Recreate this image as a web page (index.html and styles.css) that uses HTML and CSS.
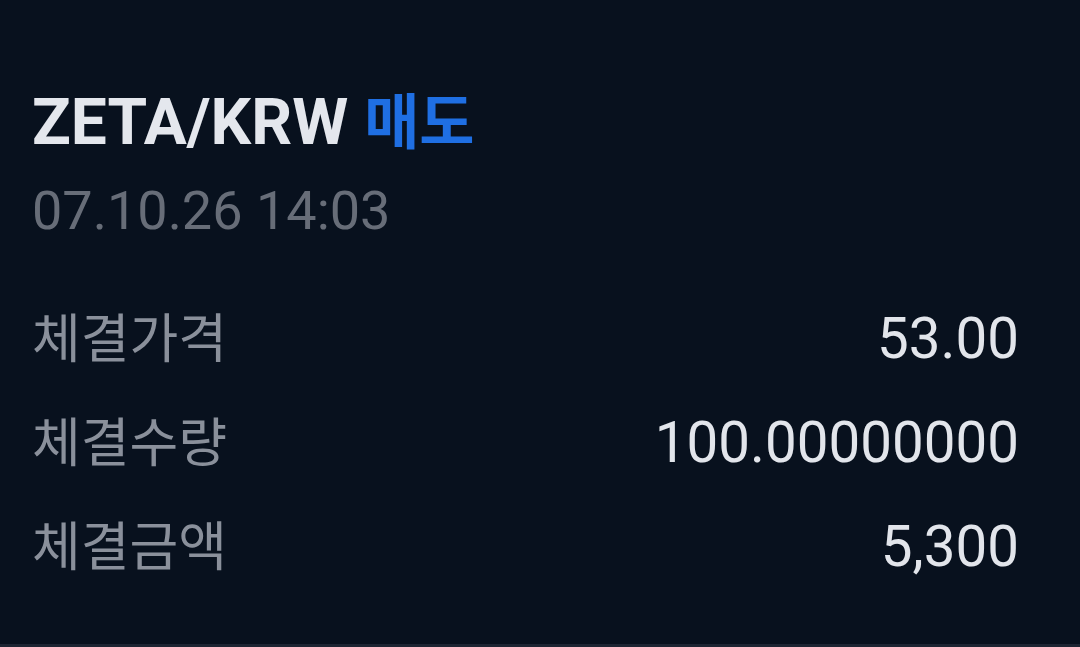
FILE: index.html
```html
<!DOCTYPE html>
<html lang="ko">
<head>
<meta charset="utf-8">
<title>체결 내역</title>
<link rel="stylesheet" href="styles.css">
</head>
<body>
<main class="sheet">
  <header class="head">
    <h1 class="pair">ZETA/KRW <span class="side">매도</span></h1>
    <div class="time">07.10.26 14:03</div>
  </header>
  <dl class="rows">
    <div class="row"><dt>체결가격</dt><dd>53.00</dd></div>
    <div class="row"><dt>체결수량</dt><dd>100.00000000</dd></div>
    <div class="row"><dt>체결금액</dt><dd>5,300</dd></div>
  </dl>
</main>
<div class="bottom-edge"></div>
</body>
</html>
```

FILE: styles.css
```css
html, body {
  margin: 0;
  height: 100%;
}
body {
  background: #08111e;
  font-family: Roboto, "Noto Sans CJK KR", sans-serif;
  display: flex;
  flex-direction: column;
  overflow: hidden;
}
.sheet {
  flex: 1;
  padding: 78px 61px 0 32px;
}
.head {
  display: flex;
  flex-direction: column;
  gap: 5px;
}
.pair {
  margin: 0;
  font-size: 64px;
  line-height: 80px;
  font-weight: 700;
  color: #e4e7ed;
}
.side {
  color: #1f6fe3;
  font-family: "Noto Sans CJK KR", sans-serif;
  font-weight: 700;
  font-size: 60px;
}
.time {
  font-size: 54px;
  line-height: 85px;
  color: #676d78;
}
.rows {
  margin: 30px 0 0;
  display: flex;
  flex-direction: column;
}
.row {
  display: flex;
  justify-content: space-between;
  align-items: baseline;
  height: 104px;
}
.row dt {
  font-family: "Noto Sans CJK KR", sans-serif;
  font-size: 53px;
  line-height: 104px;
  color: #8a909b;
}
.row dd {
  margin: 0;
  font-size: 56.5px;
  line-height: 104px;
  color: #e2e5eb;
}
.bottom-edge {
  height: 3px;
  background: #1d2533;
}
```
